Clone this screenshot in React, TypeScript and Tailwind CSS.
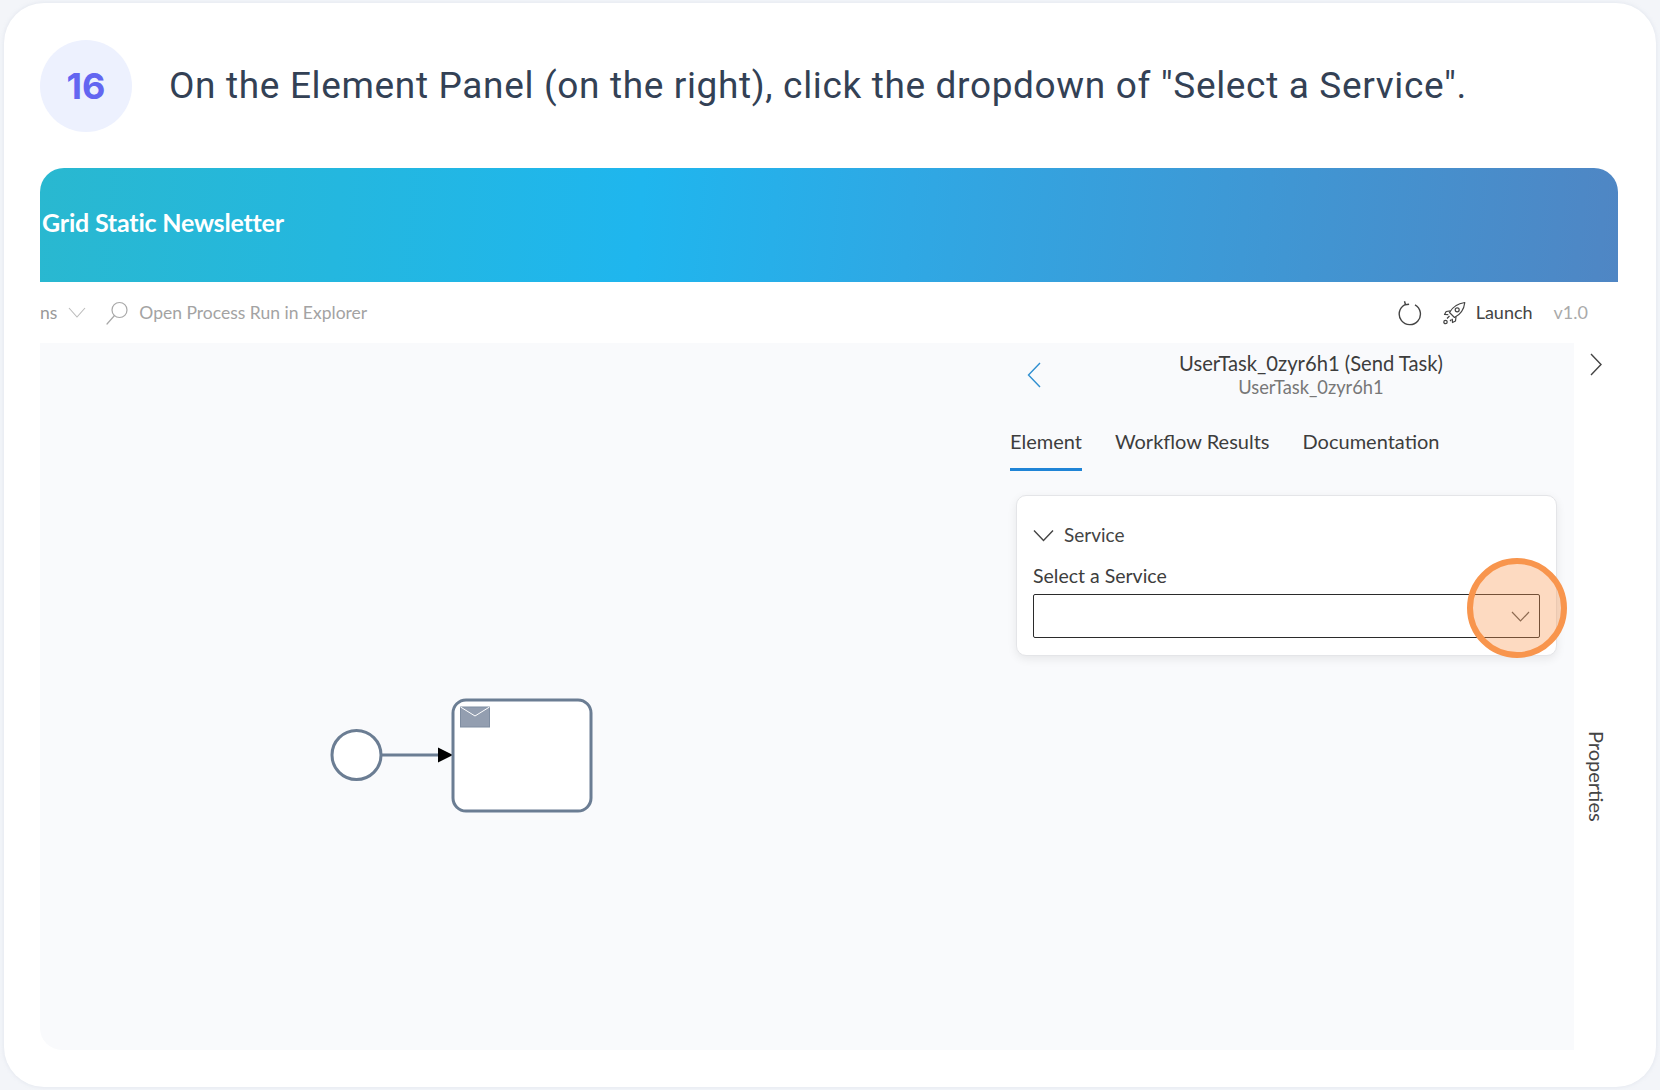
import React from "react";

const lato = "font-['Lato','Liberation_Sans',sans-serif]";

const Chevron = ({ w, h, d, color, sw = 1.4 }: { w: number; h: number; d: string; color: string; sw?: number }) => (
  <svg width={w} height={h} viewBox={`0 0 ${w} ${h}`} fill="none" stroke={color} strokeWidth={sw} className="shrink-0">
    <path d={d} />
  </svg>
);

const SearchIcon = () => (
  <svg width="24" height="24" viewBox="0 0 24 24" fill="none" stroke="#a8a8a8" strokeWidth="1.2">
    <circle cx="14.5" cy="9" r="7.5" />
    <path d="M9.5 14.5 2 23" strokeLinecap="round" />
  </svg>
);

const RefreshIcon = () => (
  <svg width="24" height="26" viewBox="0 0 24 26" fill="none" stroke="#444" strokeWidth="1.4">
    <path d="M7 4.600a10.600 10.600 0 1 0 10 .2" />
    <path d="M6.500 1.200 7.500 4.800l3.600-.6" />
  </svg>
);

const RocketIcon = () => (
  <svg width="24" height="24" viewBox="0 0 24 24" fill="none" stroke="#444" strokeWidth="1.2" strokeLinejoin="round">
    <path d="M7.5 11.5C10.500 6 15.500 2.500 22.800 1.500 22 8.500 18.500 13.500 12.500 16.500z" />
    <circle cx="15.200" cy="8.800" r="2" />
    <path d="M8.500 9.800 4.200 10.500 2.500 13.500 6.300 13.600" />
    <path d="M14 15.700 13.500 20 10.500 21.500 10.300 17.800" />
    <circle cx="3.500" cy="21" r="1.700" />
    <path d="M5 17.500 7.500 15M8 20l1.500-1.500" />
  </svg>
);

const Diagram = () => (
  <svg className="absolute left-[290px] top-[355px]" width="304" height="116" viewBox="290 355 304 116" fill="none">
    <circle cx="316.500" cy="412" r="24.500" fill="#fff" stroke="#6b7d93" strokeWidth="3" />
    <path d="M341 412h58" stroke="#6b7d93" strokeWidth="3" />
    <path d="M398 404.500 413 412l-15 7.500z" fill="#000" />
    <rect x="413" y="357" width="138" height="111" rx="13" fill="#fff" stroke="#6b7d93" strokeWidth="3" />
    <rect x="420.500" y="364" width="29" height="20" fill="#939eb0" stroke="#7f8da1" />
    <path d="M420.500 364l14.500 9 14.500-9" stroke="#fff" strokeWidth="1" />
  </svg>
);

const ElementPanel = () => (
  <div className={`w-[558px] h-full shrink-0 ${lato}`}>
    <div className="flex items-start h-[70px]">
      <div className="mt-[19px] ml-[11px]">
        <Chevron w={14} h={26} d="M13 1 1.500 13 13 25" color="#2f8fd0" />
      </div>
      <div className="ml-[64px] w-[412px] text-center">
        <div className="text-[20.200px] leading-[26px] mt-[7px] text-[#3d3d3d]">UserTask_0zyr6h1 (Send Task)</div>
        <div className="text-[18.300px] leading-[22px] text-[#777]">UserTask_0zyr6h1</div>
      </div>
    </div>
    <div className="flex gap-[33px] ml-[-6px] mt-[15px] text-[20px] leading-[26px] text-[#3d3d3d]">
      <div className="pb-[14px] border-b-[3px] border-[#1f84d6]">Element</div>
      <div>Workflow Results</div>
      <div>Documentation</div>
    </div>
    <div className="mt-[24px] w-[541px] h-[161px] bg-white rounded-[10px] border border-[#e4e5e8] shadow-[0_3px_10px_rgba(0,0,0,0.08)] px-[16px]">
      <div className="flex items-center mt-[26px] h-[26px]">
        <Chevron w={21} h={13} d="M1 1.500 10.500 11.500 20 1.500" color="#444" />
        <span className="ml-[10px] text-[19px] text-[#444]">Service</span>
      </div>
      <div className="mt-[15px] text-[19.500px] leading-[26px] text-[#3d3d3d]">Select a Service</div>
      <div className="mt-[5px] h-[44px] w-[507px] border-[1.5px] border-[#2b2b2b] rounded-[2px] flex items-center justify-end pr-[9px]">
        <Chevron w={19} h={11} d="M1 1 9.500 10 18 1" color="#555" sw={1.2} />
      </div>
    </div>
  </div>
);

export default function App() {
  return (
    <div className="h-[1090px] bg-[#f3f5f9] pt-[3px] pb-[3px] pl-[4px] pr-[4px]">
      <div className="relative h-full bg-white rounded-[40px] shadow-[0_0_4px_rgba(180,190,210,0.3)] pl-[36px] pr-[38px] pt-[37px]">
        <div className="flex items-center h-[92px]">
          <div className="w-[92px] h-[92px] rounded-full bg-[#edf1fe] flex items-center justify-center text-[36px] font-bold text-[#6366f1] font-['Inter',sans-serif]">
            16
          </div>
          <div className="ml-[37px] text-[37px] text-[#334155] font-['Roboto','Liberation_Sans',sans-serif] tracking-[0.65px] whitespace-nowrap">
            On the Element Panel (on the right), click the dropdown of "Select a Service".
          </div>
        </div>

        <div className="mt-[36px] w-[1578px] h-[882px] flex flex-col overflow-hidden">
          <div className="h-[114px] shrink-0 rounded-t-[24px] bg-[linear-gradient(95deg,#29b8d0_0%,#1fb6ee_38%,#2fa8e4_55%,#4f86c4_100%)] flex items-center pl-[2px] pb-[4px]">
            <span className={`text-[25px] font-bold text-white tracking-[-0.2px] ${lato}`}>Grid Static Newsletter</span>
          </div>

          <div className={`h-[61px] shrink-0 flex items-center bg-white text-[17.500px] ${lato}`}>
            <span className="text-[#999] pt-[1px]">ns</span>
            <div className="ml-[11px]">
              <Chevron w={18} h={11} d="M1 1 9 10 17 1" color="#bbb" sw={1.1} />
            </div>
            <div className="ml-[19px]"><SearchIcon /></div>
            <span className="ml-[10px] pt-[1px] text-[#a3a3a3]">Open Process Run in Explorer</span>
            <div className="ml-auto"><RefreshIcon /></div>
            <div className="ml-[20px]"><RocketIcon /></div>
            <span className="ml-[10px] text-[18px] text-[#444]">Launch</span>
            <span className="ml-[21px] mr-[30px] text-[18px] text-[#aaa]">v1.0</span>
          </div>

          <div className="flex flex-1 min-h-0">
            <div className="relative flex-1 flex justify-end bg-[#f9fafc] rounded-bl-[22px]">
              <Diagram />
              <ElementPanel />
            </div>
            <div className={`w-[44px] shrink-0 bg-white flex flex-col items-center ${lato}`}>
              <div className="mt-[10px]">
                <Chevron w={12} h={23} d="M1 1 11 11.500 1 22" color="#444" />
              </div>
              <div className="mt-[355px] ml-[2px] text-[20px] text-[#444] [writing-mode:vertical-rl]">Properties</div>
            </div>
          </div>
        </div>

        <div className="absolute left-[1463px] top-[555px] w-[100px] h-[100px] rounded-full border-[6px] border-[#f8954d] bg-[#f8954d]/35" />
      </div>
    </div>
  );
}
